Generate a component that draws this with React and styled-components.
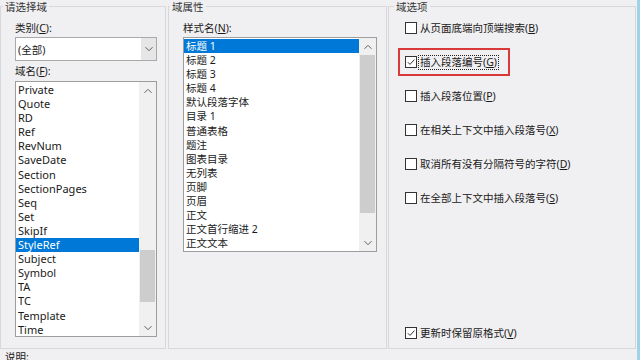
import React from 'react';
import styled, { createGlobalStyle } from 'styled-components';

const GlobalStyle = createGlobalStyle`
  html, body {
    margin: 0;
    padding: 0;
    background: #f0eff1;
  }
  body {
    width: 640px;
    height: 360px;
    overflow: hidden;
    font-family: "Noto Sans", "Noto Sans CJK SC", sans-serif;
    color: #1a1a1a;
  }
`;

const fieldNames = [
  'Private', 'Quote', 'RD', 'Ref', 'RevNum', 'SaveDate', 'Section', 'SectionPages',
  'Seq', 'Set', 'SkipIf', 'StyleRef', 'Subject', 'Symbol', 'TA', 'TC', 'Template', 'Time',
];

const styleNames = [
  '标题 1', '标题 2', '标题 3', '标题 4', '默认段落字体', '目录 1', '普通表格', '题注',
  '图表目录', '无列表', '页脚', '页眉', '正文', '正文首行缩进 2', '正文文本',
];

const options = [
  { id: 1, text: '从页面底端向顶端搜索', key: 'B' },
  { id: 2, text: '插入段落编号', key: 'G', checked: true, focused: true, marked: true },
  { id: 3, text: '插入段落位置', key: 'P' },
  { id: 4, text: '在相关上下文中插入段落号', key: 'X' },
  { id: 5, text: '取消所有没有分隔符号的字符', key: 'D' },
  { id: 6, text: '在全部上下文中插入段落号', key: 'S' },
];

const Chevron = ({ up }) => (
  <svg width="8" height="6" viewBox="0 0 8 6">
    <polyline
      points={up ? '0.5,4.8 4,1.3 7.5,4.8' : '0.5,1.2 4,4.7 7.5,1.2'}
      fill="none"
      stroke="#5f5f5f"
      strokeWidth="1"
    />
  </svg>
);

const Tick = () => (
  <svg width="10" height="10" viewBox="0 0 10 10">
    <polyline points="1.8,5.2 4,7.4 8.4,2.6" fill="none" stroke="#333" strokeWidth="1" />
  </svg>
);

const Mnemonic = ({ text, k, colon }) => (
  <>
    {text}(<Key>{k}</Key>){colon ? ':' : ''}
  </>
);

const ListBox = ({ items, selected, top, height, thumbTop, thumbHeight, size }) => (
  <List $top={top} $height={height}>
    <Items>
      {items.map((name) => (
        <Item key={name} $selected={name === selected} $size={size}>
          {name}
        </Item>
      ))}
    </Items>
    <Scrollbar>
      <Arrow><Chevron up /></Arrow>
      <Track>
        <Thumb $top={thumbTop} $height={thumbHeight} />
      </Track>
      <Arrow><Chevron /></Arrow>
    </Scrollbar>
  </List>
);

const App = () => {
  return (
    <Dialog>
      <GlobalStyle />
      <Groups>
        <Group $width={166} $gap={2} $padLeft={14} $padRight={8}>
          <Title $offset={-12}>请选择域</Title>
          <FieldLabel $top={8}><Mnemonic text="类别" k="C" colon /></FieldLabel>
          <Combo>
            <ComboText>(全部)</ComboText>
            <ComboButton><Chevron /></ComboButton>
          </Combo>
          <FieldLabel $top={3}><Mnemonic text="域名" k="F" colon /></FieldLabel>
          <ListBox
            items={fieldNames}
            selected="StyleRef"
            top={3}
            height={256}
            thumbTop={151}
            thumbHeight={52}
            size={11}
          />
        </Group>

        <Group $width={219} $gap={1} $padLeft={14} $padRight={9}>
          <Title $offset={-13}>域属性</Title>
          <FieldLabel $top={8}><Mnemonic text="样式名" k="N" colon /></FieldLabel>
          <ListBox
            items={styleNames}
            selected="标题 1"
            top={2}
            height={215}
            thumbTop={0}
            thumbHeight={158}
            size={10.5}
          />
        </Group>

        <Group $width={248} $padLeft={16} $padRight={8}>
          <Title $offset={-11}>域选项</Title>
          <Options>
            {options.map((o) => (
              <Option key={o.id} $marked={o.marked}>
                <Box>{o.checked && <Tick />}</Box>
                <OptionText $focused={o.focused}>
                  <Mnemonic text={o.text} k={o.key} />
                </OptionText>
              </Option>
            ))}
            <Option $bottom>
              <Box><Tick /></Box>
              <OptionText><Mnemonic text="更新时保留原格式" k="V" /></OptionText>
            </Option>
          </Options>
        </Group>
      </Groups>
      <Note>说明:</Note>
    </Dialog>
  );
};

const Dialog = styled.div`
  width: 640px;
  height: 360px;
  box-sizing: border-box;
  overflow: hidden;
  padding-right: 1px;
  border-right: 3px solid #9fd3ea;
  background: #f0eff1;
  font-size: 10.5px;
`;

const Groups = styled.div`
  display: flex;
  align-items: flex-start;
`;

const Group = styled.fieldset`
  box-sizing: border-box;
  width: ${(p) => p.$width}px;
  height: 349px;
  min-width: 0;
  margin: 0 ${(p) => p.$gap || 0}px 0 0;
  padding: 0 ${(p) => p.$padRight}px 0 ${(p) => p.$padLeft}px;
  border: 1px solid #d9d7db;
  display: flex;
  flex-direction: column;
`;

const Title = styled.legend`
  margin-left: ${(p) => p.$offset}px;
  padding: 2px 2px 0;
  font-size: 10.5px;
  line-height: 11px;
  color: #333;
`;

const Key = styled.span`
  text-decoration: underline;
  text-underline-offset: 1px;
`;

const FieldLabel = styled.div`
  margin-top: ${(p) => p.$top}px;
  line-height: 14px;
  white-space: nowrap;
`;

const Combo = styled.div`
  margin-top: 2px;
  height: 24px;
  box-sizing: border-box;
  border: 1px solid #a9a9a9;
  background: #fff;
  display: flex;
  align-items: center;
`;

const ComboText = styled.span`
  flex: 1;
  padding-left: 2px;
`;

const ComboButton = styled.span`
  width: 15px;
  align-self: stretch;
  background: #e6e6e6;
  display: flex;
  align-items: center;
  justify-content: center;
`;

const List = styled.div`
  margin-top: ${(p) => p.$top}px;
  height: ${(p) => p.$height}px;
  box-sizing: border-box;
  border: 1px solid #9d9d9d;
  background: #fff;
  display: flex;
  overflow: hidden;
`;

const Items = styled.div`
  flex: 1;
  min-width: 0;
  padding-top: 1px;
`;

const Item = styled.div`
  height: 14.1px;
  line-height: 14px;
  padding-left: 2px;
  white-space: nowrap;
  font-size: ${(p) => p.$size}px;
  background: ${(p) => (p.$selected ? '#0078d7' : 'transparent')};
  color: ${(p) => (p.$selected ? '#fff' : '#1a1a1a')};
`;

const Scrollbar = styled.div`
  width: 17px;
  flex-shrink: 0;
  background: #f0f0f0;
  display: flex;
  flex-direction: column;
`;

const Arrow = styled.div`
  height: 17px;
  flex-shrink: 0;
  display: flex;
  align-items: center;
  justify-content: center;
`;

const Track = styled.div`
  flex: 1;
  display: flex;
  flex-direction: column;
`;

const Thumb = styled.div`
  margin: ${(p) => p.$top}px 1px 0;
  height: ${(p) => p.$height}px;
  background: #cdcdcd;
`;

const Options = styled.div`
  flex: 1;
  display: flex;
  flex-direction: column;
  gap: 14px;
  padding: 5px 0 5px;
`;

const Option = styled.label`
  position: relative;
  align-self: flex-start;
  height: 20px;
  margin-top: ${(p) => (p.$bottom ? 'auto' : '0')};
  display: inline-flex;
  align-items: center;
  color: #1a1a1a;

  &::after {
    content: '';
    display: ${(p) => (p.$marked ? 'block' : 'none')};
    position: absolute;
    top: -4px;
    bottom: -4px;
    left: -7px;
    right: -12px;
    border: 2px solid #d8393b;
  }
`;

const Box = styled.span`
  width: 12px;
  height: 12px;
  box-sizing: border-box;
  border: 1px solid #333;
  background: #fff;
  display: flex;
  align-items: center;
  justify-content: center;
`;

const OptionText = styled.span`
  margin-left: 2px;
  padding: 0 1px;
  line-height: 13px;
  white-space: nowrap;
  outline: ${(p) => (p.$focused ? '1px dotted #222' : 'none')};
`;

const Note = styled.div`
  margin-top: 1px;
  padding-left: 5px;
  line-height: 14px;
`;

export default App;
